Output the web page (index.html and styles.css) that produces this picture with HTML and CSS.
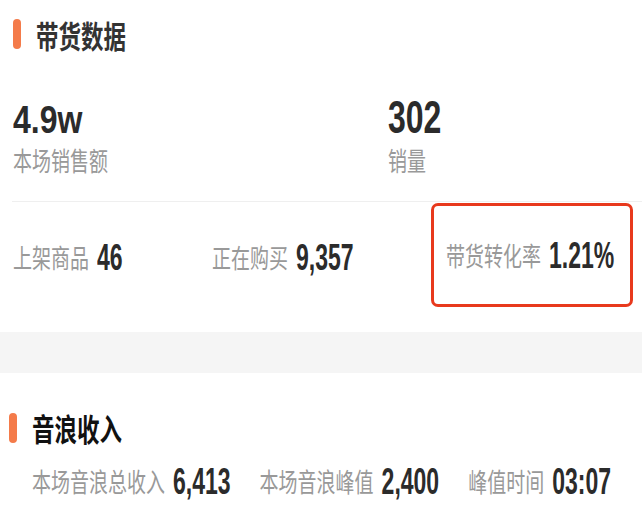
FILE: index.html
```html
<!DOCTYPE html>
<html lang="zh-CN">
<head>
  <meta charset="UTF-8">
  <meta name="viewport" content="width=device-width, initial-scale=1.0">
  <title>直播数据</title>
  <link rel="stylesheet" href="styles.css">
</head>
<body>

<div class="panel sales">
  <div class="section-title">
    <span class="bar"></span>
    <h2>带货数据</h2>
  </div>

  <div class="big-stats">
    <div class="big-item">
      <div class="big-num">4.9w</div>
      <div class="big-label">本场销售额</div>
    </div>
    <div class="big-item">
      <div class="big-num narrow">302</div>
      <div class="big-label">销量</div>
    </div>
  </div>

  <div class="divider"></div>

  <div class="stat-row">
    <div class="stat">
      <span class="label">上架商品</span>
      <span class="num">46</span>
    </div>
    <div class="stat">
      <span class="label">正在购买</span>
      <span class="num">9,357</span>
    </div>
    <div class="stat highlight">
      <span class="label">带货转化率</span>
      <span class="num">1.21%</span>
    </div>
  </div>
</div>

<div class="gap-band"></div>

<div class="panel income">
  <div class="section-title">
    <span class="bar"></span>
    <h2>音浪收入</h2>
  </div>

  <div class="inline-stats">
    <div class="stat">
      <span class="label">本场音浪总收入</span>
      <span class="num">6,413</span>
    </div>
    <div class="stat">
      <span class="label">本场音浪峰值</span>
      <span class="num">2,400</span>
    </div>
    <div class="stat">
      <span class="label">峰值时间</span>
      <span class="num">03:07</span>
    </div>
  </div>
</div>

</body>
</html>
```

FILE: styles.css
```css
body {
  margin: 0;
  background-color: #fff;
  font-family: "Noto Sans CJK SC", "Noto Sans", sans-serif;
}

.panel {
  background-color: #fff;
}

.sales {
  height: 332px;
  padding: 17px 0 0 13px;
  box-sizing: border-box;
}

.section-title {
  display: flex;
  align-items: center;
  gap: 15px;
  height: 34px;
}

.bar {
  width: 8px;
  height: 30px;
  border-radius: 4px;
  background-color: #f47b4a;
}

.section-title h2 {
  margin: 0;
  font-size: 22.5px;
  line-height: 34px;
  font-weight: bold;
  color: #333;
  transform: scaleY(1.35);
}

.big-stats {
  display: grid;
  grid-template-columns: 375px 1fr;
  margin-top: 56px;
}

/* display digits are a tall condensed face in the app */
.big-num {
  font-family: "Liberation Sans", Arial, sans-serif;
  font-size: 32px;
  line-height: 30px;
  font-weight: bold;
  color: #2b2b2b;
  transform: scaleY(1.22);
  transform-origin: 0 26px;
}

.big-num.narrow {
  transform: scaleY(1.45);
}

.big-label {
  margin-top: 10px;
  font-size: 19px;
  line-height: 26px;
  color: #999;
  transform: scaleY(1.4);
  transform-origin: left center;
}

.divider {
  height: 1px;
  margin-top: 28px;
  margin-left: -1px;
  background-color: #efefef;
}

.stat-row {
  display: grid;
  grid-template-columns: 199px 219px 202px;
  align-items: center;
  height: 106px;
  margin-top: 2px;
}

.stat {
  display: flex;
  align-items: center;
  gap: 8px;
  white-space: nowrap;
}

.label {
  display: inline-block;
  font-size: 19px;
  line-height: 30px;
  color: #999;
  transform: scaleY(1.4);
}

.num {
  display: inline-block;
  font-family: "Liberation Sans", Arial, sans-serif;
  font-size: 23px;
  line-height: 30px;
  font-weight: bold;
  color: #2b2b2b;
  transform: scaleY(1.6);
}

.highlight {
  height: 104px;
  padding: 0 12px;
  border: 3px solid #e8391d;
  border-radius: 7px;
  box-sizing: border-box;
  margin-top: -4px;
}

.gap-band {
  height: 41px;
  background-color: #f5f5f5;
}

.income {
  padding: 38px 0 30px 9px;
}

.income .section-title h2 {
  color: #111;
}

.inline-stats {
  display: flex;
  gap: 29px;
  margin-top: 21px;
  padding-left: 23px;
}
```
